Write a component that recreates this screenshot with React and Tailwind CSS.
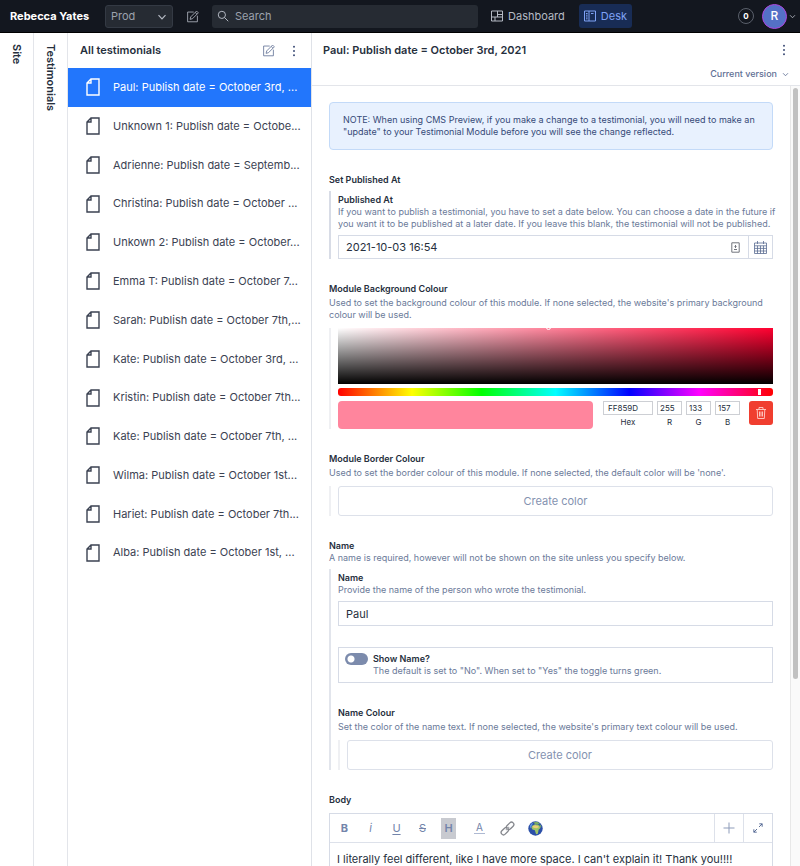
import React from "react";

const testimonials = [
  "Paul: Publish date = October 3rd, ...",
  "Unknown 1: Publish date = Octobe...",
  "Adrienne: Publish date = Septemb...",
  "Christina: Publish date = October ...",
  "Unkown 2: Publish date = October...",
  "Emma T: Publish date = October 7...",
  "Sarah: Publish date = October 7th,...",
  "Kate: Publish date = October 3rd, ...",
  "Kristin: Publish date = October 7th...",
  "Kate: Publish date = October 7th, ...",
  "Wilma: Publish date = October 1st...",
  "Hariet: Publish date = October 7th...",
  "Alba: Publish date = October 1st, ...",
];

function Svg({ className, viewBox = "0 0 16 16", children }) {
  return (
    <svg
      className={className}
      viewBox={viewBox}
      fill="none"
      stroke="currentColor"
      aria-hidden="true"
    >
      {children}
    </svg>
  );
}

function ComposeIcon({ className }) {
  return (
    <Svg className={className}>
      <path d="M9.500 2.500H2v12h12V7" />
      <path d="M5 11.500l.8-3L13 1.300l2.200 2.200L8 10.700l-3 .8zM11.300 3l2.200 2.200" />
    </Svg>
  );
}

function Chevron({ className }) {
  return (
    <Svg className={className} viewBox="0 0 10 10">
      <path d="M1.500 3.200L5 6.800l3.500-3.600" strokeWidth="1.2" />
    </Svg>
  );
}

function Dots({ className }) {
  return (
    <svg className={className} viewBox="0 0 4 12" fill="currentColor" aria-hidden="true">
      <circle cx="2" cy="1.7" r="1" />
      <circle cx="2" cy="6" r="1" />
      <circle cx="2" cy="10.3" r="1" />
    </svg>
  );
}

function DocumentIcon() {
  return (
    <Svg className="h-[18px] w-[14px] shrink-0" viewBox="0 0 14 18">
      <path d="M5 1h8v16H1V5l4-4zM5 1v4H1" strokeWidth="1.4" />
    </Svg>
  );
}

function TrashIcon() {
  return (
    <Svg className="h-3 w-3" viewBox="0 0 12 12">
      <path d="M1 2.500h10M4 2.500v-2h4v2M2.200 2.500l.5 9h6.600l.5-9M4.500 4.500v5M6 4.500v5M7.500 4.500v5" strokeWidth="0.9" />
    </Svg>
  );
}

function Header() {
  return (
    <header className="flex h-[33px] shrink-0 items-center border-b border-black bg-[#13171f] text-[11px] text-[#b5bac4]">
      <h1 className="w-[95px] pl-[10px] font-bold whitespace-nowrap text-white">Rebecca Yates</h1>
      <div className="relative ml-[10px] h-[23px] w-[68px]">
        <select
          aria-label="Dataset"
          className="h-full w-full appearance-none rounded-[3px] border border-[#343a44] bg-[#262b33] pl-[5px] text-[#9ca2ad]"
        >
          <option>Prod</option>
        </select>
        <Chevron className="pointer-events-none absolute top-[7px] right-[6px] h-[10px] w-[10px]" />
      </div>
      <button className="ml-[13px]" aria-label="Create new document">
        <ComposeIcon className="h-[13px] w-[13px]" />
      </button>
      <label className="ml-[13px] flex h-[23px] min-w-0 grow items-center rounded-[3px] bg-[#262b33] pl-[5px]">
        <Svg className="h-[12px] w-[12px] shrink-0">
          <circle cx="6.5" cy="6.5" r="4.8" strokeWidth="1.3" />
          <path d="M10 10l5 5" strokeWidth="1.3" />
        </Svg>
        <input
          aria-label="Search"
          placeholder="Search"
          className="ml-[6px] min-w-0 grow bg-transparent outline-none placeholder:text-[#9ca2ad]"
        />
      </label>
      <nav className="ml-[7px] flex items-center gap-[8px]">
        <a href="#dashboard" className="flex h-[24px] items-center gap-[5px] px-[6px]">
          <Svg className="h-[12px] w-[12px]" viewBox="0 0 12 12">
            <path d="M.5 1h11v10H.5zM6.500 1v6M.5 7h11M4 7v4M6.500 4.500h5" />
          </Svg>
          Dashboard
        </a>
        <a href="#desk" className="flex h-[24px] items-center gap-[5px] rounded-[3px] bg-[#182c55] px-[5px] text-[#7fa2f5]">
          <Svg className="h-[12px] w-[12px]" viewBox="0 0 12 12">
            <path d="M.5 1h11v10H.5zM5 1v10M2 3.500h1.600M2 5.200h1.600M2 7h1.600M2 8.800h1.600M7 3.500h2.500" />
          </Svg>
          Desk
        </a>
      </nav>
      <button
        aria-label="Notifications"
        className="ml-[106px] flex h-[16px] w-[16px] shrink-0 items-center justify-center rounded-full border border-[#5a606b] text-[8px] font-bold text-white"
      >
        0
      </button>
      <button aria-label="Account" className="mr-[4px] ml-[8px] flex shrink-0 items-center gap-[2px]">
        <span className="flex h-[25px] w-[25px] items-center justify-center rounded-full border border-[#b044dd] bg-[#5470c6] text-[12px] font-medium text-white">
          R
        </span>
        <Chevron className="h-[7px] w-[7px]" />
      </button>
    </header>
  );
}

function CollapsedPane({ title }) {
  return (
    <section className="flex w-[34px] shrink-0 justify-center border-r border-[#e3e5ea] pt-[11px]">
      <h2 className="text-[11px] font-semibold [writing-mode:vertical-rl]">{title}</h2>
    </section>
  );
}

function ListPane() {
  return (
    <section className="w-[244px] shrink-0 border-r border-[#dfe2e8]">
      <div className="flex h-[35px] items-center pr-[15px] pl-[12px]">
        <h2 className="grow text-[11px] font-semibold">All testimonials</h2>
        <button aria-label="Create new testimonial" className="text-[#5f6f94]">
          <ComposeIcon className="h-[13px] w-[13px]" />
        </button>
        <button aria-label="List options" className="ml-[17px] text-[#3f4f78]">
          <Dots className="h-[12px] w-[4px]" />
        </button>
      </div>
      <ul className="grid h-[504px] auto-rows-fr text-[11px]">
        {testimonials.map((t, i) => (
          <li key={t}>
            <a
              href="#testimonial"
              className={
                i === 0
                  ? "flex h-full items-center gap-[13px] bg-[#2276fc] pl-[18px] whitespace-nowrap text-white"
                  : "flex h-full items-center gap-[13px] pl-[18px] whitespace-nowrap text-[#3b4252]"
              }
            >
              <DocumentIcon />
              {t}
            </a>
          </li>
        ))}
      </ul>
    </section>
  );
}

function FieldText({ id, title, children, gap = false }) {
  return (
    <div className="text-[9px] leading-[12px]">
      <label htmlFor={id} className={gap ? "mb-[2px] block font-semibold" : "block font-semibold"}>
        {title}
      </label>
      {children && <p className="-mr-2 text-[#6b7a99]">{children}</p>}
    </div>
  );
}

function CreateColor({ id }) {
  return (
    <div className="mt-[7px] border-l-2 border-[#eff0f3] pl-[7px]">
      <button id={id} className="h-[30px] w-full rounded-[3px] border border-[#dde1ea] text-[11px] text-[#8492b0]">
        Create color
      </button>
    </div>
  );
}

function ColorInput({ label, value, id, wide }) {
  return (
    <div className={wide ? "flex w-[50px] flex-col items-center" : "flex w-[25px] flex-col items-center"}>
      <input
        id={id}
        defaultValue={value}
        className={
          wide
            ? "h-[14px] w-full border border-[#cdcfd4] pl-[4px] text-[8px]"
            : "h-[14px] w-full border border-[#cdcfd4] pl-[2px] text-[8px]"
        }
      />
      <label htmlFor={id} className="mt-[1px] text-[8px] leading-[12px]">
        {label}
      </label>
    </div>
  );
}

function ColorPicker() {
  return (
    <div className="mt-[7px] border-l-2 border-[#eff0f3] pl-[7px]">
      <div className="relative h-[56px] overflow-hidden bg-[linear-gradient(to_top,#000,transparent),linear-gradient(to_right,#fff,#ff0030)]">
        <span className="absolute top-[-3px] left-[47.8%] h-[5px] w-[5px] rounded-full border border-white" />
      </div>
      <div className="relative mt-[4px] h-[8px] rounded-[3px] bg-[linear-gradient(to_right,#f00_0%,#ff0_17%,#0f0_33%,#0ff_50%,#00f_67%,#f0f_83%,#f00_100%)]">
        <span className="absolute top-[1px] left-[96.5%] h-[6px] w-[3px] bg-white" />
      </div>
      <div className="mt-[5px] flex items-start">
        <div className="h-[28px] grow rounded-[4px] bg-[#ff859d]" />
        <div className="ml-[10px] flex gap-[4px]">
          <ColorInput id="hex" label="Hex" value="FF859D" wide />
          <ColorInput id="red" label="R" value="255" />
          <ColorInput id="green" label="G" value="133" />
          <ColorInput id="blue" label="B" value="157" />
        </div>
        <button
          type="button"
          aria-label="Delete color"
          className="ml-[9px] flex h-[24px] w-[24px] items-center justify-center rounded-[3px] bg-[#f03e2f] text-[#ffd0cb]"
        >
          <TrashIcon />
        </button>
      </div>
    </div>
  );
}

function LinkIcon() {
  return (
    <Svg className="h-[15px] w-[15px]">
      <g transform="rotate(-45 8 8)" stroke="#85878d" strokeWidth="1.4">
        <rect x="-0.5" y="5.5" width="9" height="5" rx="2.5" />
        <rect x="7.5" y="5.5" width="9" height="5" rx="2.5" />
        <path d="M5.500 8h5" stroke="#a9abb0" />
      </g>
    </Svg>
  );
}

function GlobeIcon() {
  return (
    <svg className="h-[15px] w-[15px]" viewBox="0 0 16 16" aria-hidden="true">
      <circle cx="8" cy="8" r="7.7" fill="#2c50a8" />
      <path d="M2 5a7 7 0 0 1 3.500-3.300L4 5 2.500 8z" fill="#5d95e6" />
      <path d="M5.500 1.500l4-.6 3 1.600-2 1.400-2.500-.4z" fill="#79ae63" />
      <path d="M4.500 5l3-1.500 4.400.9 1.600 2.800-2.200 2-.8 4.300-1.900.6-1.300-4.200L4.700 9 3.500 7z" fill="#9dc469" />
      <path d="M4.700 5.500L7.500 4.500l3.500.8.6 1.400-2.600 1-3.200-.4z" fill="#edcd78" />
      <path d="M12.400 3.200l2 2.700-1.500.5z" fill="#79ae63" />
    </svg>
  );
}

function Toolbar() {
  const base = "flex h-[21px] w-[15px] items-center justify-center";
  return (
    <div className="flex h-[29px] items-center border-b border-[#dde1ea] pl-[7px] text-[11px] text-[#7384aa]">
      <div className="flex grow items-center gap-[11px]">
        <button type="button" className={base}><b>B</b></button>
        <button type="button" className={base}><i>i</i></button>
        <button type="button" className={base}><u className="underline-offset-2">U</u></button>
        <button type="button" className={base}><s>S</s></button>
        <button type="button" className="flex h-[21px] w-[15px] items-center justify-center bg-[#c8cad0] font-semibold">H</button>
        <button type="button" className="ml-[7px] flex h-[12px] w-[11px] items-center justify-center border-b border-[#aeb9d2] text-[10px]">A</button>
        <button type="button" aria-label="Link" className="ml-[4px]"><LinkIcon /></button>
        <button type="button" aria-label="External link" className="ml-[2px]"><GlobeIcon /></button>
      </div>
      <button type="button" aria-label="Insert" className="flex h-full w-[29px] items-center justify-center border-l border-[#dde1ea] text-[#8d9bb9]">
        <Svg className="h-[12px] w-[12px]" viewBox="0 0 12 12">
          <path d="M6 .5v11M.5 6h11" />
        </Svg>
      </button>
      <button type="button" aria-label="Expand editor" className="flex h-full w-[29px] items-center justify-center border-l border-[#dde1ea] text-[#3f5585]">
        <Svg className="h-[10px] w-[10px]" viewBox="0 0 12 12">
          <path d="M7.200 4.800L11 1M7.500 1H11v3.500M4.800 7.200L1 11M1 7.500V11h3.500" />
        </Svg>
      </button>
    </div>
  );
}

function Editor() {
  return (
    <section className="flex min-w-0 grow flex-col">
      <div className="h-[53px] shrink-0 border-b border-[#e3e5ea] px-[11px]">
        <div className="flex h-[34px] items-center justify-between">
          <h2 className="text-[11px] font-semibold">Paul: Publish date = October 3rd, 2021</h2>
          <button aria-label="Document options" className="mr-[3px] text-[#3f4f78]">
            <Dots className="h-[12px] w-[4px]" />
          </button>
        </div>
        <button className="ml-auto flex items-center gap-[5px] text-[9px] leading-[14px] font-medium text-[#5f6f94]">
          Current version
          <Chevron className="h-[7px] w-[7px]" />
        </button>
      </div>
      <div className="flex min-h-0 grow">
        <form className="min-w-0 grow overflow-hidden px-[17px] pt-[16px]">
          <p className="rounded-[4px] border border-[#c3daf8] bg-[#e8f1fe] px-[13px] py-[11px] text-[9px] leading-[12px] text-[#364a78]">
            NOTE: When using CMS Preview, if you make a change to a testimonial, you will need to make an "update" to
            your Testimonial Module before you will see the change reflected.
          </p>

          <fieldset className="mt-[24px]">
            <legend className="text-[9px] leading-[12px] font-semibold">Set Published At</legend>
            <div className="mt-[5px] border-l-2 border-[#d8dce6] pt-[3px] pl-[7px]">
              <FieldText id="published" title="Published At">
                If you want to publish a testimonial, you have to set a date below. You can choose a date in the future
                if you want it to be published at a later date. If you leave this blank, the testimonial will not be
                published.
              </FieldText>
              <div className="mt-[5px] flex h-[24px] items-center border border-[#d6dbe6]">
                <input
                  id="published"
                  defaultValue="2021-10-03 16:54"
                  className="min-w-0 grow bg-transparent pl-[7px] text-[11px] outline-none"
                />
                <Svg className="mr-[8px] h-[11px] w-[9px] text-[#72757d]" viewBox="0 0 9 11">
                  <path d="M.8.8h7.400v9.400H.8zM3 7.500h3M4.500 3v3M3.500 4.500h2" />
                </Svg>
                <button
                  type="button"
                  aria-label="Select date"
                  className="flex h-full w-[24px] items-center justify-center border-l border-[#d6dbe6] text-[#5b6c92]"
                >
                  <Svg className="h-[13px] w-[13px]" viewBox="0 0 13 13">
                    <path d="M.5 2h12v10.500H.5zM.5 4.800h12M.5 7.400h12M.5 10h12M3.500 4.800v7.700M6.500 4.800v7.700M9.500 4.800v7.700M3.500 0v3M9.500 0v3" strokeWidth="0.8" />
                  </Svg>
                </button>
              </div>
            </div>
          </fieldset>

          <div className="mt-[24px]">
            <FieldText id="hex" title="Module Background Colour" gap>
              Used to set the background colour of this module. If none selected, the website's primary background
              colour will be used.
            </FieldText>
            <ColorPicker />
          </div>

          <div className="mt-[24px]">
            <FieldText id="border-colour" title="Module Border Colour" gap>
              Used to set the border colour of this module. If none selected, the default color will be 'none'.
            </FieldText>
            <CreateColor id="border-colour" />
          </div>

          <fieldset className="mt-[24px]">
            <legend className="text-[9px] leading-[12px] font-semibold">Name</legend>
            <p className="text-[9px] leading-[12px] text-[#6b7a99]">
              A name is required, however will not be shown on the site unless you specify below.
            </p>
            <div className="mt-[5px] border-l-2 border-[#e2e5ec] pt-[3px] pl-[7px]">
              <FieldText id="name" title="Name">
                Provide the name of the person who wrote the testimonial.
              </FieldText>
              <input
                id="name"
                defaultValue="Paul"
                className="mt-[5px] block h-[25px] w-full border border-[#d6dbe6] pl-[7px] text-[11px] outline-none"
              />
              <div className="mt-[21px] flex gap-[5px] border border-[#d6dbe6] px-[6px] py-[5px]">
                <input
                  id="show-name"
                  type="checkbox"
                  role="switch"
                  className="h-[12px] w-[23px] shrink-0 appearance-none rounded-full bg-[#7c8bac] bg-[radial-gradient(circle_at_6px_6px,#fff_3px,transparent_4px)]"
                />
                <FieldText id="show-name" title="Show Name?">
                  The default is set to "No". When set to "Yes" the toggle turns green.
                </FieldText>
              </div>
              <div className="mt-[24px]">
                <FieldText id="name-colour" title="Name Colour" gap>
                  Set the color of the name text. If none selected, the website's primary text colour will be used.
                </FieldText>
                <CreateColor id="name-colour" />
              </div>
            </div>
          </fieldset>

          <div className="mt-[24px]">
            <FieldText id="body" title="Body" />
            <div className="mt-[7px] border border-[#d6dbe6]">
              <Toolbar />
              <textarea
                id="body"
                defaultValue="I literally feel different, like I have more space. I can't explain it! Thank you!!!!"
                className="block h-[80px] w-full resize-none px-[7px] pt-[7px] text-[11px] leading-[18px] outline-none"
              />
            </div>
          </div>
        </form>
        <div className="w-[10px] shrink-0 border-l border-[#e8e8e8] bg-[#fafafa] px-[2px] pt-[2px]">
          <div className="h-[591px] rounded-full bg-[#c1c1c1]" />
        </div>
      </div>
    </section>
  );
}

export default function App() {
  return (
    <div className="flex h-screen flex-col overflow-hidden bg-white font-['Inter',sans-serif] text-[#262f3d]">
      <Header />
      <main className="flex min-h-0 grow">
        <CollapsedPane title="Site" />
        <CollapsedPane title="Testimonials" />
        <ListPane />
        <Editor />
      </main>
    </div>
  );
}
